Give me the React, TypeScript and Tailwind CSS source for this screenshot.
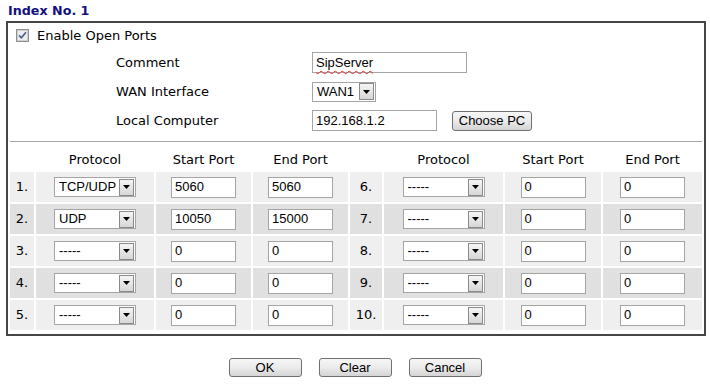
import React from "react";

const verdana = "font-['DejaVu_Sans',Verdana,sans-serif]";
const arial = "font-['Liberation_Sans',Arial,sans-serif]";

function Arrow() {
  return (
    <svg width="7" height="4" viewBox="0 0 7 4">
      <path d="M0 0 H7 L3.5 4 Z" fill="#000" />
    </svg>
  );
}

function Select({ text, className }: { text: string; className: string }) {
  return (
    <div className={`flex h-[20px] items-center border border-[#a5a5a5] bg-white ${className}`}>
      <div className={`flex-1 pl-[4px] text-[13px] leading-[16px] text-black ${arial}`}>{text}</div>
      <div className="mr-[1px] flex h-[17px] w-[15px] items-center justify-center border border-[#8a8a8a] bg-linear-to-b from-[#f6f6f6] to-[#d6d6d6]">
        <Arrow />
      </div>
    </div>
  );
}

function Input({ text, className, wavy }: { text: string; className: string; wavy?: boolean }) {
  return (
    <div className={`flex h-[21px] items-center border border-[#a5a5a5] bg-white pl-[3px] ${className}`}>
      <span
        className={`text-[13px] leading-[16px] text-black ${arial} ${
          wavy ? "underline decoration-wavy decoration-[#e03030] decoration-1 underline-offset-[3px]" : ""
        }`}
      >
        {text}
      </span>
    </div>
  );
}

function Button({ label, className }: { label: string; className: string }) {
  return (
    <div
      className={`flex items-center justify-center rounded-[3px] border border-[#707070] bg-linear-to-b from-[#f6f6f6] via-[#ebebeb] to-[#d4d4d4] text-[13px] leading-[15px] text-black ${arial} ${className}`}
    >
      {label}
    </div>
  );
}

function Checkbox() {
  return (
    <svg width="13" height="13" viewBox="0 0 13 13">
      <rect x="0.5" y="0.5" width="12" height="12" fill="#dcdcdc" stroke="#8e8f8f" />
      <rect x="1.5" y="1.5" width="10" height="10" fill="#eeeeee" stroke="#cfcfcf" />
      <path d="M3 6.3 L5.4 8.8 L10 3.2" stroke="#4c5f92" strokeWidth="1.7" fill="none" />
    </svg>
  );
}

type Row = { n: string; proto: string; start: string; end: string };

const left: Row[] = [
  { n: "1.", proto: "TCP/UDP", start: "5060", end: "5060" },
  { n: "2.", proto: "UDP", start: "10050", end: "15000" },
  { n: "3.", proto: "-----", start: "0", end: "0" },
  { n: "4.", proto: "-----", start: "0", end: "0" },
  { n: "5.", proto: "-----", start: "0", end: "0" },
];
const right: Row[] = [
  { n: "6.", proto: "-----", start: "0", end: "0" },
  { n: "7.", proto: "-----", start: "0", end: "0" },
  { n: "8.", proto: "-----", start: "0", end: "0" },
  { n: "9.", proto: "-----", start: "0", end: "0" },
  { n: "10.", proto: "-----", start: "0", end: "0" },
];

export default function App() {
  const headers = ["", "Protocol", "Start Port", "End Port", "", "Protocol", "Start Port", "End Port"];
  return (
    <div className="h-[387px] w-[710px] overflow-hidden bg-white">
      <div className={`h-[21px] pl-[8px] pt-[3px] text-[12.7px] font-bold leading-[15px] text-[#10107f] ${verdana}`}>
        Index No. 1
      </div>
      <div className={`ml-[6px] w-[700px] border-2 border-[#454545] pb-[4px] text-[13px] text-black ${verdana}`}>
        <div className="flex h-[25px] items-center gap-[8px] pl-[8px]">
          <Checkbox />
          <span className="leading-[15px]">Enable Open Ports</span>
        </div>
        <div className="grid grid-cols-[196px_1fr] pl-[108px]">
          <div className="flex h-[29px] items-center">Comment</div>
          <div className="flex h-[29px] items-center">
            <Input text="SipServer" className="w-[155px]" wavy />
          </div>
          <div className="flex h-[29px] items-center">WAN Interface</div>
          <div className="flex h-[29px] items-center">
            <Select text="WAN1" className="w-[64px]" />
          </div>
          <div className="flex h-[29px] items-center">Local Computer</div>
          <div className="flex h-[29px] items-center gap-[15px]">
            <Input text="192.168.1.2" className="w-[125px]" />
            <Button label="Choose PC" className="h-[20px] w-[80px]" />
          </div>
        </div>
        <div className="mx-[2px] mt-[6px] border-t border-[#a8a8a8]" />
        <div className="grid grid-cols-[24px_118px_95px_95px_32px_119px_96px_99px] gap-x-[2px] gap-y-[2px] px-[2px]">
          {headers.map((h, i) => (
            <div key={"h" + i} className="flex h-[28px] items-center justify-center pt-[8px]">
              {h}
            </div>
          ))}
          {left.map((l, i) => {
            const r = right[i];
            const bg = i % 2 === 0 ? "bg-[#efefef]" : "bg-[#e0e0e0]";
            return (
              <React.Fragment key={i}>
                <div className={`flex h-[30px] items-center justify-center ${bg}`}>{l.n}</div>
                <div className={`flex h-[30px] items-center justify-center ${bg}`}>
                  <Select text={l.proto} className="w-[82px]" />
                </div>
                <div className={`flex h-[30px] items-center justify-center ${bg}`}>
                  <Input text={l.start} className="w-[65px]" />
                </div>
                <div className={`flex h-[30px] items-center justify-center ${bg}`}>
                  <Input text={l.end} className="w-[65px]" />
                </div>
                <div className={`flex h-[30px] items-center justify-center ${bg}`}>{r.n}</div>
                <div className={`flex h-[30px] items-center justify-center ${bg}`}>
                  <Select text={r.proto} className="w-[82px]" />
                </div>
                <div className={`flex h-[30px] items-center justify-center ${bg}`}>
                  <Input text={r.start} className="w-[65px]" />
                </div>
                <div className={`flex h-[30px] items-center justify-center ${bg}`}>
                  <Input text={r.end} className="w-[65px]" />
                </div>
              </React.Fragment>
            );
          })}
        </div>
      </div>
      <div className="mt-[22px] flex justify-center gap-[17px]">
        <Button label="OK" className="h-[19px] w-[73px]" />
        <Button label="Clear" className="h-[19px] w-[73px]" />
        <Button label="Cancel" className="h-[19px] w-[73px]" />
      </div>
    </div>
  );
}
